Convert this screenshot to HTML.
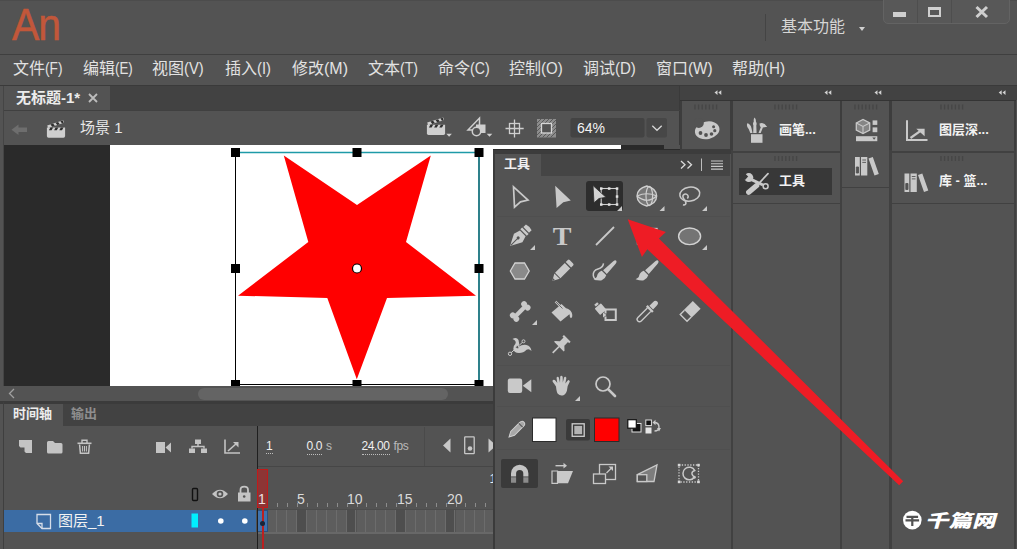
<!DOCTYPE html>
<html lang="zh-CN">
<head>
<meta charset="utf-8">
<title>Animate</title>
<style>
*{box-sizing:border-box;margin:0;padding:0}
html,body{width:1017px;height:549px;overflow:hidden;background:#535353}
body{position:relative;font-family:"Liberation Sans","Noto Sans CJK SC",sans-serif;color:#e6e6e6;font-size:15px}
.a{position:absolute}
.t{position:absolute;white-space:nowrap;line-height:1}
svg{position:absolute;overflow:visible}
.l{display:inline-block;transform:scaleX(.82);transform-origin:0 50%}
</style>
</head>
<body>
<!-- title bar -->
<div class="a" id="titlebar" style="left:0;top:0;width:1017px;height:54px;background:#535353"></div>
<div class="a" style="left:0;top:0;width:1017px;height:1px;background:#4c4c4c"></div>
<div class="t" id="logo" style="left:12px;top:3px;font-size:44px;color:#c2573a;-webkit-text-stroke:.5px #c2573a;transform:scaleX(.93);transform-origin:0 0;letter-spacing:-1px">An</div>
<div class="a" style="left:765px;top:14px;width:1px;height:27px;background:#444"></div>
<div class="t" style="left:781px;top:19px;font-size:16px;color:#d6d6d6">基本功能</div>
<div class="a" style="left:859px;top:27px;width:0;height:0;border-left:3px solid transparent;border-right:3px solid transparent;border-top:4px solid #d0d0d0"></div>
<!-- window controls -->
<div class="a" style="left:883px;top:-1px;width:127px;height:25px;background:#585858;border:1px solid #636363;border-radius:0 0 5px 5px"></div>
<div class="a" style="left:917px;top:0;width:1px;height:23px;background:#4e4e4e"></div>
<div class="a" style="left:951px;top:0;width:1px;height:23px;background:#4e4e4e"></div>
<div class="a" style="left:893px;top:12px;width:13px;height:5px;background:#cfcfcf"></div>
<div class="a" style="left:928px;top:7px;width:13px;height:10px;border:2.500px solid #cfcfcf;border-top-width:3px"></div>
<svg style="left:975px;top:7px" width="14" height="10"><path d="M1.500 0 L12 10 M12 0 L1.500 10" stroke="#cfcfcf" stroke-width="3" fill="none"/></svg>
<!-- menu bar -->
<div class="a" style="left:0;top:54px;width:1017px;height:1px;background:#3f3f3f"></div>
<div class="a" id="menubar" style="left:0;top:55px;width:1017px;height:30px;background:#535353"></div>
<div class="t m" style="left:13px">文件<span class="l" style="transform:scaleX(0.855)">(F)</span></div>
<div class="t m" style="left:83px">编辑<span class="l" style="transform:scaleX(0.833)">(E)</span></div>
<div class="t m" style="left:152px">视图<span class="l" style="transform:scaleX(0.919)">(V)</span></div>
<div class="t m" style="left:225px">插入<span class="l" style="transform:scaleX(0.92)">(I)</span></div>
<div class="t m" style="left:292px">修改<span class="l" style="transform:scaleX(1.0)">(M)</span></div>
<div class="t m" style="left:368px">文本<span class="l" style="transform:scaleX(0.883)">(T)</span></div>
<div class="t m" style="left:438px">命令<span class="l" style="transform:scaleX(0.882)">(C)</span></div>
<div class="t m" style="left:509px">控制<span class="l" style="transform:scaleX(0.94)">(O)</span></div>
<div class="t m" style="left:583px">调试<span class="l" style="transform:scaleX(0.94)">(D)</span></div>
<div class="t m" style="left:656px">窗口<span class="l" style="transform:scaleX(0.955)">(W)</span></div>
<div class="t m" style="left:732px">帮助<span class="l" style="transform:scaleX(0.947)">(H)</span></div>
<style>.m{top:61px;font-size:16px;color:#e2e2e2}</style>
<!-- doc tab bar -->
<div class="a" style="left:4px;top:85px;width:1013px;height:26px;background:#424242"></div>
<div class="a" style="left:0;top:85px;width:1017px;height:1px;background:#3a3a3a"></div>
<div class="a" style="left:4px;top:86px;width:106px;height:25px;background:#535353"></div>
<div class="t" style="left:16px;top:90px;font-size:15px;font-weight:700;color:#ececec">无标题-1*</div>
<svg style="left:88px;top:93px" width="10" height="10"><path d="M1 1 L9 9 M9 1 L1 9" stroke="#bdbdbd" stroke-width="1.8" fill="none"/></svg>
<div class="a" style="left:3px;top:86px;width:1px;height:316px;background:#454545"></div>
<!-- scene bar -->
<div class="a" style="left:4px;top:110px;width:676px;height:1px;background:#404040;z-index:2"></div>
<div class="a" style="left:4px;top:111px;width:676px;height:35px;background:#535353"></div>
<div class="t" style="left:80px;top:120px;font-size:15px;color:#e6e6e6">场景 1</div>
<svg id="sceneicons" style="left:0;top:0" width="690" height="150" viewBox="0 0 690 150" fill="#cfcfcf">
<path d="M11.500 129.800 L18.500 124.500 V127.500 H27 V132 H18.500 V135 Z" fill="#6e6e6e"/>
<!-- clapper left -->
<g transform="translate(46.9 120.2)"><path d="M0 7.400 H18.200 V15.900 Q18.200 17.500 16.600 17.500 H1.600 Q0 17.500 0 15.900 Z"/><path d="M.3 5.200 L16.300 0 L17.200 2.600 L1.200 7.800 Z"/><path d="M3.600 4.200 l2.600 -.85 l1.700 2.300 l-2.600 .85 Z M8.600 2.600 l2.600 -.85 l1.700 2.300 l-2.600 .85 Z M13.500 1 l2.300 -.75 l1 2.500 l-1.600 .5 Z M3.500 7.400 h2.700 l-1.500 2.600 h-2.700 Z M8.700 7.400 h2.700 l-1.500 2.600 h-2.700 Z M13.900 7.400 h2.700 l-1.500 2.600 h-2.700 Z" fill="#2e2e2e"/></g>
<!-- clapper right -->
<g transform="translate(426.9 117.4)"><path d="M0 7.400 H18.200 V15.900 Q18.200 17.500 16.600 17.500 H1.600 Q0 17.500 0 15.900 Z"/><path d="M.3 5.200 L16.300 0 L17.200 2.600 L1.200 7.800 Z"/><path d="M3.600 4.200 l2.600 -.85 l1.700 2.300 l-2.600 .85 Z M8.600 2.600 l2.600 -.85 l1.700 2.300 l-2.600 .85 Z M13.500 1 l2.300 -.75 l1 2.500 l-1.600 .5 Z M3.500 7.400 h2.700 l-1.500 2.600 h-2.700 Z M8.700 7.400 h2.700 l-1.500 2.600 h-2.700 Z M13.900 7.400 h2.700 l-1.500 2.600 h-2.700 Z" fill="#2e2e2e"/></g>
<path d="M446.300 133.700 h5.600 l-2.800 3 Z M486.700 133.700 h5.600 l-2.800 3 Z"/>
<!-- symbol icon -->
<path d="M468 130 L479.500 118 V130 Z" fill="none" stroke="#cfcfcf" stroke-width="1.500"/>
<rect x="476" y="124.500" width="9.500" height="8.500"/>
<circle cx="476.500" cy="131.500" r="4.200" fill="#535353" stroke="#cfcfcf" stroke-width="1.500"/>
<!-- crosshair -->
<path d="M514.500 119.500 V137.500 M505.500 128.500 H523.700" stroke="#cfcfcf" stroke-width="1.300" fill="none"/>
<rect x="509.500" y="123.500" width="10" height="10" fill="none" stroke="#cfcfcf" stroke-width="1.300"/>
<!-- clip icon -->
<rect x="537" y="119" width="19" height="18.500" fill="#8d8d8d"/>
<path d="M537 123 l4 -4 M537 127 l8 -8 M537 131 l12 -12 M537 135 l16 -16 M538.500 137.500 l17.500 -17.500 M542.500 137.500 l13.500 -13.500 M546.500 137.500 l9.500 -9.500 M550.500 137.500 l5.500 -5.500" stroke="#5a5a5a" stroke-width="1" fill="none"/>
<rect x="541.500" y="123.500" width="10" height="9.500" fill="#535353" stroke="#d6d6d6" stroke-width="1.300"/>
<!-- combo -->
<rect x="570.500" y="118" width="74" height="19.500" rx="2" fill="#434343"/>
<rect x="646.500" y="118" width="20.500" height="19.500" rx="2" fill="#474747"/>
<path d="M652.300 125.800 L657 130.300 L661.700 125.800" fill="none" stroke="#d6d6d6" stroke-width="1.300"/>
</svg>
<div class="t" style="left:577px;top:121px;font-size:14px;color:#f2f2f2">64%</div>
<div class="a" style="left:679px;top:86px;width:2px;height:315px;background:#3a3a3a"></div>
<!-- stage -->
<div class="a" style="left:4px;top:145px;width:676px;height:241px;background:#2a2a2a"></div>
<div class="a" style="left:110px;top:145px;width:511px;height:241px;background:#fff"></div>
<div class="a" style="left:664px;top:145px;width:16px;height:241px;background:#535353"></div>

<!-- selection box + star -->
<svg style="left:0;top:0" width="1017" height="549" viewBox="0 0 1017 549">
<polygon points="283.800,155.500 357,205 430.800,155.500 406,242 476,295.700 387,298 356.800,379.300 327.300,298 238,295.700 308.300,242" fill="#ff0000"/>
<path d="M235.500 152.500 V384.500 H479" stroke="#000" stroke-width="1" fill="none"/>
<path d="M235.500 152.500 H479" stroke="#1e9aa8" stroke-width="1.400" fill="none"/>
<path d="M479 152.500 V384.500" stroke="#0a6b77" stroke-width="1.700" fill="none"/>
<g fill="#000">
<rect x="231" y="148" width="9" height="9"/><rect x="352.500" y="148" width="9" height="9"/><rect x="474.500" y="148" width="9" height="9"/>
<rect x="231" y="264" width="9" height="9"/><rect x="474.500" y="264" width="9" height="9"/>
<rect x="231" y="380" width="9" height="6"/><rect x="352.500" y="380" width="9" height="6"/><rect x="474.500" y="380" width="9" height="6"/>
</g>
<circle cx="357" cy="268.5" r="4.5" fill="#fff" stroke="#000" stroke-width="1.2"/>
</svg>
<!-- h scrollbar -->
<div class="a" style="left:0;top:386px;width:495px;height:15px;background:#535353"></div>
<div class="a" style="left:198px;top:388px;width:250px;height:12px;background:#646464;border-radius:6px"></div>
<svg style="left:8px;top:388px" width="8" height="11"><path d="M6 1 L1.5 5.5 L6 10" stroke="#a0a0a0" stroke-width="1.3" fill="none"/></svg>


<!-- timeline -->
<div class="a" style="left:0;top:401px;width:495px;height:3px;background:#3b3b3b"></div>
<div class="a" style="left:4px;top:404px;width:490px;height:22px;background:#424242"></div>
<div class="a" style="left:4px;top:404px;width:59px;height:22px;background:#535353"></div>
<div class="t" style="left:13px;top:407px;font-size:13px;font-weight:700;color:#ececec">时间轴</div>
<div class="t" style="left:71px;top:407px;font-size:13px;font-weight:700;color:#8e8e8e">输出</div>
<div class="a" style="left:4px;top:426px;width:490px;height:123px;background:#535353"></div>
<div class="a" style="left:3px;top:402px;width:1px;height:147px;background:#3f3f3f"></div>
<div class="a" style="left:256.500px;top:426px;width:1.500px;height:123px;background:#1f1f1f"></div>
<div class="a" style="left:258px;top:466px;width:236px;height:1px;background:#464646"></div>
<div class="a" style="left:424px;top:427px;width:1px;height:39px;background:#4a4a4a"></div>
<!-- toolbar icons -->
<svg style="left:0;top:0" width="500" height="549" viewBox="0 0 500 549" fill="#c4c4c4">
<path d="M19 440 H32 V453 H26 L19 446 Z M20.5 447.5 H24.5 V451.5 Z" fill-rule="evenodd"/>
<path d="M47 442.5 Q47 441 48.5 441 H53 L55 443 H61 Q62.5 443 62.5 444.5 V452 Q62.5 453.5 61 453.5 H48.5 Q47 453.5 47 452 Z"/>
<g fill="none" stroke="#c4c4c4"><path d="M79.600 444.500 L80.400 453.200 H88.600 L89.400 444.500" stroke-width="1.500"/><path d="M77.500 443.300 H91.500" stroke-width="1.600"/><path d="M82 443 V440.300 H87 V443" stroke-width="1.400"/><path d="M82.600 446 V451.500 M84.500 446 V451.500 M86.400 446 V451.500" stroke-width="1"/></g>
<path d="M156 442 H165 V453 H156 Z M165.5 447.5 L171 442.5 V452.5 Z"/>
<path d="M195 439.500 H201 V444 H195 Z M189 448.500 H195 V453 H189 Z M201 448.500 H207 V453 H201 Z"/>
<path d="M198 444 V446.500 M192 448.500 V446.500 H204 V448.500" stroke="#c4c4c4" stroke-width="1.4" fill="none"/>
<path d="M225 439.500 V453 H240" stroke="#c4c4c4" stroke-width="1.6" fill="none"/>
<path d="M228 451 L237 443" stroke="#c4c4c4" stroke-width="1.6" fill="none"/>
<path d="M233 442 H238.500 V447.500 Z"/>
<!-- header icons -->
<rect x="192.500" y="488.500" width="5" height="12" rx="1" fill="none" stroke="#111" stroke-width="1.4"/>
<path d="M212 494 Q220 485.500 228 494 Q220 502.500 212 494 Z"/>
<circle cx="220" cy="494" r="3.300" fill="#535353"/><circle cx="220" cy="494" r="1.600"/>
<path d="M238 492.500 H250.500 V501.500 H238 Z"/>
<path d="M240.500 493 V490 Q240.500 486.700 244.200 486.700 Q248 486.700 248 490 V493" stroke="#c4c4c4" stroke-width="1.800" fill="none"/>
<circle cx="244.200" cy="496.500" r="1.300" fill="#535353"/>
</svg>
<!-- time readouts -->
<div class="t" style="left:266px;top:440px;font-size:12px;color:#f0f0f0;border-bottom:1px dotted #bdbdbd;padding-bottom:1px">1</div>
<div class="t" style="left:306.500px;top:440px;font-size:12px;letter-spacing:-.4px;color:#f0f0f0"><span style="border-bottom:1px dotted #bdbdbd;padding-bottom:1px">0.0</span><span style="color:#b9b9b9;margin-left:4px">s</span></div>
<div class="t" style="left:361.500px;top:440px;font-size:12px;letter-spacing:-.4px;color:#f0f0f0"><span style="border-bottom:1px dotted #bdbdbd;padding-bottom:1px">24.00</span><span style="color:#b9b9b9;margin-left:4px">fps</span></div>
<svg style="left:440px;top:434px" width="55" height="24" viewBox="440 434 55 24" fill="#c8c8c8">
<path d="M450.500 438.500 V452.500 L443 445.500 Z"/>
<rect x="464.700" y="436.800" width="9.500" height="16.800" rx=".6" fill="none" stroke="#c8c8c8" stroke-width="1.300"/>
<circle cx="470" cy="448.500" r="2.300"/>
<path d="M488.500 438.500 V452.500 L494 447.500 V443.500 Z"/>
</svg>
<div class="t" style="left:489.500px;top:472px;font-size:13px;color:#f0f0f0;width:4px;height:14px;overflow:hidden">1</div>
<!-- ruler -->
<div class="a" style="left:277.3px;top:503px;width:1px;height:4px;background:#8c8c8c"></div><div class="a" style="left:287.2px;top:503px;width:1px;height:4px;background:#8c8c8c"></div><div class="a" style="left:297.1px;top:503px;width:1px;height:4px;background:#8c8c8c"></div><div class="a" style="left:307.0px;top:503px;width:1px;height:4px;background:#8c8c8c"></div><div class="a" style="left:316.9px;top:503px;width:1px;height:4px;background:#8c8c8c"></div><div class="a" style="left:326.8px;top:503px;width:1px;height:4px;background:#8c8c8c"></div><div class="a" style="left:336.7px;top:503px;width:1px;height:4px;background:#8c8c8c"></div><div class="a" style="left:346.6px;top:503px;width:1px;height:4px;background:#8c8c8c"></div><div class="a" style="left:356.5px;top:503px;width:1px;height:4px;background:#8c8c8c"></div><div class="a" style="left:366.4px;top:503px;width:1px;height:4px;background:#8c8c8c"></div><div class="a" style="left:376.3px;top:503px;width:1px;height:4px;background:#8c8c8c"></div><div class="a" style="left:386.2px;top:503px;width:1px;height:4px;background:#8c8c8c"></div><div class="a" style="left:396.1px;top:503px;width:1px;height:4px;background:#8c8c8c"></div><div class="a" style="left:406.0px;top:503px;width:1px;height:4px;background:#8c8c8c"></div><div class="a" style="left:415.9px;top:503px;width:1px;height:4px;background:#8c8c8c"></div><div class="a" style="left:425.8px;top:503px;width:1px;height:4px;background:#8c8c8c"></div><div class="a" style="left:435.7px;top:503px;width:1px;height:4px;background:#8c8c8c"></div><div class="a" style="left:445.6px;top:503px;width:1px;height:4px;background:#8c8c8c"></div><div class="a" style="left:455.5px;top:503px;width:1px;height:4px;background:#8c8c8c"></div><div class="a" style="left:465.4px;top:503px;width:1px;height:4px;background:#8c8c8c"></div><div class="a" style="left:475.3px;top:503px;width:1px;height:4px;background:#8c8c8c"></div><div class="a" style="left:485.2px;top:503px;width:1px;height:4px;background:#8c8c8c"></div>

<div class="t r" style="left:258px;z-index:3;color:#f0e0e0">1</div>
<div class="t r" style="left:297px">5</div>
<div class="t r" style="left:347px">10</div>
<div class="t r" style="left:397px">15</div>
<div class="t r" style="left:447px">20</div>
<style>.r{top:492px;font-size:14px;color:#dadada}</style>
<!-- layer row -->
<div class="a" style="left:4px;top:510px;width:252px;height:22px;background:#3b6ca4"></div>
<svg style="left:0;top:0" width="260" height="549" viewBox="0 0 260 549">
<path d="M37 514.500 H50.500 V528.500 H42 L37 523.500 Z" fill="none" stroke="#d6dde8" stroke-width="1.300"/>
<path d="M37 523.500 H42 V528.500" fill="none" stroke="#d6dde8" stroke-width="1.300"/>
<rect x="191.500" y="513.500" width="6.500" height="14" fill="#00f0ff"/>
<circle cx="220.800" cy="521" r="2.800" fill="#fff"/><circle cx="244.800" cy="521" r="2.800" fill="#fff"/>
</svg>
<div class="t" style="left:58px;top:513px;font-size:15px;color:#f2f2f2">图层_1</div>
<!-- frames -->
<div class="a" style="left:257.5px;top:510px;width:9.9px;height:22px;background:#5d5d5d;border-right:1.500px solid #6c6c6c"></div>
<div class="a" style="left:267.4px;top:510px;width:9.9px;height:22px;background:#5d5d5d;border-right:1.500px solid #6c6c6c"></div>
<div class="a" style="left:277.3px;top:510px;width:9.9px;height:22px;background:#5d5d5d;border-right:1.500px solid #6c6c6c"></div>
<div class="a" style="left:287.2px;top:510px;width:9.9px;height:22px;background:#5d5d5d;border-right:1.500px solid #6c6c6c"></div>
<div class="a" style="left:297.1px;top:510px;width:9.9px;height:22px;background:#4e4e4e;border-right:1.500px solid #6c6c6c"></div>
<div class="a" style="left:307.0px;top:510px;width:9.9px;height:22px;background:#5d5d5d;border-right:1.500px solid #6c6c6c"></div>
<div class="a" style="left:316.9px;top:510px;width:9.9px;height:22px;background:#5d5d5d;border-right:1.500px solid #6c6c6c"></div>
<div class="a" style="left:326.8px;top:510px;width:9.9px;height:22px;background:#5d5d5d;border-right:1.500px solid #6c6c6c"></div>
<div class="a" style="left:336.7px;top:510px;width:9.9px;height:22px;background:#5d5d5d;border-right:1.500px solid #6c6c6c"></div>
<div class="a" style="left:346.6px;top:510px;width:9.9px;height:22px;background:#4e4e4e;border-right:1.500px solid #6c6c6c"></div>
<div class="a" style="left:356.5px;top:510px;width:9.9px;height:22px;background:#5d5d5d;border-right:1.500px solid #6c6c6c"></div>
<div class="a" style="left:366.4px;top:510px;width:9.9px;height:22px;background:#5d5d5d;border-right:1.500px solid #6c6c6c"></div>
<div class="a" style="left:376.3px;top:510px;width:9.9px;height:22px;background:#5d5d5d;border-right:1.500px solid #6c6c6c"></div>
<div class="a" style="left:386.2px;top:510px;width:9.9px;height:22px;background:#5d5d5d;border-right:1.500px solid #6c6c6c"></div>
<div class="a" style="left:396.1px;top:510px;width:9.9px;height:22px;background:#4e4e4e;border-right:1.500px solid #6c6c6c"></div>
<div class="a" style="left:406.0px;top:510px;width:9.9px;height:22px;background:#5d5d5d;border-right:1.500px solid #6c6c6c"></div>
<div class="a" style="left:415.9px;top:510px;width:9.9px;height:22px;background:#5d5d5d;border-right:1.500px solid #6c6c6c"></div>
<div class="a" style="left:425.8px;top:510px;width:9.9px;height:22px;background:#5d5d5d;border-right:1.500px solid #6c6c6c"></div>
<div class="a" style="left:435.7px;top:510px;width:9.9px;height:22px;background:#5d5d5d;border-right:1.500px solid #6c6c6c"></div>
<div class="a" style="left:445.6px;top:510px;width:9.9px;height:22px;background:#4e4e4e;border-right:1.500px solid #6c6c6c"></div>
<div class="a" style="left:455.5px;top:510px;width:9.9px;height:22px;background:#5d5d5d;border-right:1.500px solid #6c6c6c"></div>
<div class="a" style="left:465.4px;top:510px;width:9.9px;height:22px;background:#5d5d5d;border-right:1.500px solid #6c6c6c"></div>
<div class="a" style="left:475.3px;top:510px;width:9.9px;height:22px;background:#5d5d5d;border-right:1.500px solid #6c6c6c"></div>
<div class="a" style="left:485.2px;top:510px;width:8.8px;height:22px;background:#5d5d5d;border-right:1.500px solid #6c6c6c"></div>


<div class="a" style="left:257.500px;top:510px;width:10px;height:22px;background:#3f72ae;border:1px solid #2b4f7d;border-left:none"></div>
<div class="a" style="left:258px;top:509px;width:236px;height:1px;background:#4c4c4c"></div>
<div class="a" style="left:258px;top:532px;width:236px;height:1.500px;background:#686868"></div>
<!-- playhead -->
<div class="a" style="left:256.500px;top:469px;width:11.500px;height:38.500px;background:rgba(190,30,30,.55);border:1.500px solid #c01a1a"></div>
<div class="a" style="left:262px;top:507px;width:1.500px;height:42px;background:#bb2020"></div>
<div class="a" style="left:260px;top:521px;width:5px;height:5px;background:#16243a;border-radius:50%"></div>

<!-- tools panel -->
<div class="a" style="left:493px;top:150px;width:239px;height:399px;background:#535353"></div>
<div class="a" style="left:493px;top:149px;width:239px;height:5px;background:#3c3c3c;border-top:1.500px solid #2b2b2b"></div>
<div class="a" style="left:493px;top:150px;width:2px;height:399px;background:#3b3b3b"></div>
<div class="a" style="left:730.500px;top:150px;width:1.500px;height:399px;background:#404040"></div>
<div class="a" style="left:495px;top:154px;width:235px;height:22px;background:#454545"></div>
<div class="a" style="left:495px;top:154px;width:46px;height:22px;background:#535353"></div>
<div class="t" style="left:504px;top:157px;font-size:13px;font-weight:700;color:#f0f0f0">工具</div>
<svg style="left:676px;top:156px" width="52" height="18" viewBox="676 156 52 18" fill="none" stroke="#dcdcdc">
<path d="M681 161 L685 164.700 L681 168.400 M687.500 161 L691.500 164.700 L687.500 168.400" stroke-width="1.300"/>
<path d="M701.500 158.500 V171" stroke="#bdbdbd" stroke-width="1"/>
<path d="M711 161 H723 M711 163.700 H723 M711 166.400 H723 M711 169.100 H723" stroke="#c8c8c8" stroke-width="1.100"/>
</svg>
<div class="a" style="left:497px;top:216px;width:233px;height:1px;background:#4f4f4f"></div>
<div class="a" style="left:497px;top:365px;width:233px;height:1px;background:#4f4f4f"></div>
<div class="a" style="left:497px;top:406px;width:233px;height:1px;background:#4f4f4f"></div>
<div class="a" style="left:497px;top:449px;width:233px;height:1px;background:#4f4f4f"></div>
<div class="a" style="left:586px;top:181px;width:37px;height:30px;background:#2d2d2d;border-radius:3px"></div>
<div class="a" style="left:501px;top:459px;width:37px;height:29px;background:#3a3a3a;border-radius:2px"></div>
<svg id="toolicons" style="left:0;top:0" width="1017" height="549" viewBox="0 0 1017 549" fill="#c9c9c9" stroke="none">
<!-- row1 -->
<path d="M513.500 186.800 L528 200 L520.500 201.800 L514.500 207.200 Z" fill="none" stroke="#c9c9c9" stroke-width="1.700" stroke-linejoin="miter"/>
<path d="M555.200 185.800 L570.800 200.600 L563.300 202.200 L556.600 208 Z"/>
<g stroke="#d0d0d0" stroke-width="1.100" fill="none"><rect x="601.200" y="188.500" width="15.800" height="16"/></g>
<g fill="#e2e2e2"><rect x="600" y="187.300" width="2.500" height="2.500"/><rect x="607.900" y="187.300" width="2.500" height="2.500"/><rect x="615.800" y="187.300" width="2.500" height="2.500"/><rect x="615.800" y="195.300" width="2.500" height="2.500"/><rect x="600" y="203.300" width="2.500" height="2.500"/><rect x="607.900" y="203.300" width="2.500" height="2.500"/><rect x="615.800" y="203.300" width="2.500" height="2.500"/></g>
<path d="M593 185.500 L606 197.300 L599 198.500 L594 202.800 Z" fill="#d4d4d4" stroke="#2d2d2d" stroke-width=".8"/>
<path d="M646.800 186 Q656.500 188.500 656.700 196 Q656.500 203.500 646.800 206 Q637.200 203.500 637 196 Q637.200 188.500 646.800 186 Z" fill="#777" stroke="#cfcfcf" stroke-width="1.300"/>
<g fill="none" stroke="#cfcfcf" stroke-width="1.200"><ellipse cx="649.300" cy="196" rx="3.300" ry="9.600"/><path d="M637 196 Q647 204.500 656.700 196 M637 196 Q647 191.500 656.700 196"/></g>
<g fill="none" stroke="#c9c9c9" stroke-width="1.500"><ellipse cx="689.800" cy="194.100" rx="10" ry="7" transform="rotate(-8 689.800 194.100)"/><path d="M687.300 198.500 a2.600 2.600 0 1 0 -4.300 -1.200 c.7 2.500 4.500 4.500 2.500 7 q-1 1 -2.500 .5"/></g>
<path d="M622 206 v5 h-5 Z M664.500 206 v5 h-5 Z M707 206 v5 h-5 Z"/>
<!-- row2 -->
<g transform="translate(520.300 235.800) rotate(45)"><path d="M0 14.500 L-6 3 L-4 -3.500 H4 L6 3 Z M-4.600 -4.600 H4.600 V-7.200 H-4.600 Z M-4 -8.300 H4 V-12 Q0 -13.300 -4 -12 Z"/><circle cx="0" cy="3" r="1.500" fill="#535353"/><path d="M0 4 V13.500" stroke="#535353" stroke-width="1"/></g>
<text x="562" y="244.600" text-anchor="middle" font-family="'Liberation Serif',serif" font-weight="700" font-size="25.500" transform="translate(562 0) scale(1.1 1) translate(-562 0)">T</text>
<path d="M596 245 L614 227" stroke="#c9c9c9" stroke-width="1.800" fill="none"/>
<rect x="637.500" y="228.500" width="19.500" height="15.500" fill="#868686" stroke="#d2d2d2" stroke-width="1.300"/>
<ellipse cx="689.600" cy="236.300" rx="11" ry="8.300" fill="#747474" stroke="#d2d2d2" stroke-width="1.400"/>
<path d="M535 245 v5 h-5 Z M707 245 v5 h-5 Z"/>
<!-- row3 -->
<path d="M510.300 271 L515 263 H524.500 L529.200 271 L524.500 279 H515 Z" fill="#8a8a8a" stroke="#d2d2d2" stroke-width="1.300"/>
<g transform="translate(562.200 271) rotate(45)"><path d="M0 14 L-3.800 7.300 H3.800 Z M-3.800 6.300 H3.800 V-7.500 H-3.800 Z M-3.800 -8.800 H3.800 V-11.700 Q3.800 -13 2.400 -13 H-2.400 Q-3.800 -13 -3.800 -11.700 Z"/><path d="M0 14 L-1.300 11.600 H1.300 Z" fill="#535353"/></g>
<g transform="translate(606 271) rotate(45)"><path d="M0 -14.500 Q1.400 -14.500 1.700 -12 L2.600 1.500 H-2.600 L-1.700 -12 Q-1.400 -14.500 0 -14.500 Z M-3.200 2.800 H3.200 Q5 6 3.500 9.500 Q2 12 -3 14.500 Q-1.500 11 -3 9.500 Q-5 6.500 -3.200 2.800 Z"/></g>
<path d="M603.500 263.300 Q603 267.500 598 269 Q592.800 270.500 593.300 275.500 Q593.800 278.800 596.500 279.800" fill="none" stroke="#c9c9c9" stroke-width="1.500"/>
<g transform="translate(648 271) rotate(45)"><path d="M0 -14.500 Q1.400 -14.500 1.700 -12 L2.600 1.500 H-2.600 L-1.700 -12 Q-1.400 -14.500 0 -14.500 Z M-3.200 2.800 H3.200 Q5 6 3.500 9.500 Q2 12 -3 14.500 Q-1.500 11 -3 9.500 Q-5 6.500 -3.200 2.800 Z"/></g>
<!-- row4 -->
<g transform="translate(520.200 311.500) rotate(45)"><rect x="-2.100" y="-7" width="4.200" height="14"/><circle cx="-2.500" cy="-8" r="2.900"/><circle cx="2.500" cy="-8" r="2.900"/><circle cx="-2.500" cy="8" r="2.900"/><circle cx="2.500" cy="8" r="2.900"/></g>
<path d="M537 320 v5 h-5 Z"/>
<path d="M561.500 304 L571 313 L560.500 321.500 L551.500 312.500 Z"/>
<path d="M555.500 301.500 L562.500 308.500" stroke="#c9c9c9" stroke-width="2.200" fill="none"/>
<path d="M555.500 301.500 L562.500 308.500" stroke="#535353" stroke-width=".8" fill="none"/>
<path d="M566 308 Q572 310 572.300 315 Q572.500 318 571 318.300 Q569.500 318 569.700 315 Z"/>
<g transform="translate(599.800 308.300) rotate(-40) scale(.88)"><rect x="-4.700" y="-3.500" width="9.400" height="9.500" rx="1"/><rect x="-2.200" y="-7.200" width="4.400" height="2.800"/></g>
<path d="M605.500 313.500 V309.500 H615.800 V320 H605.500 V316.500" fill="none" stroke="#c9c9c9" stroke-width="2"/>
<path d="M603 312.500 l3.500 2.500 l-3.500 2.500 Z"/>
<g transform="translate(647 311.800) rotate(45)"><path d="M-2.400 -3 V10.500 Q-2.400 13 0 13 Q2.400 13 2.400 10.500 V-3" fill="none" stroke="#c9c9c9" stroke-width="1.400"/><rect x="-4.300" y="-5.200" width="8.600" height="2.400"/><path d="M-2.600 -6 H2.600 V-11 Q2.600 -14.500 0 -14.500 Q-2.600 -14.500 -2.600 -11 Z"/></g>
<g transform="translate(690 311.500) rotate(45)"><path d="M-5.500 -9.500 H5.500 V3 H-5.500 Z"/><path d="M-4.800 3 V9 H4.800 V3" fill="none" stroke="#c9c9c9" stroke-width="1.400"/></g>
<!-- row5 -->
<path d="M512.500 339 Q516.500 336.500 518.500 340 Q520 343.500 518 347 Q522.500 344.300 526.500 345 Q530.800 346 531.500 351 Q529 348.300 526.500 349.800 Q523.500 353 519 353 Q514 352.800 513.300 349 Q513 346 515.300 344 Q517 341 512.500 339 Z"/>
<path d="M510 353.800 L523.500 341.300" stroke="#c9c9c9" stroke-width="1" fill="none"/>
<circle cx="510" cy="353.800" r="1.700" fill="#535353" stroke="#c9c9c9" stroke-width="1"/><circle cx="517.300" cy="347.200" r="1.600" fill="#535353" stroke="#c9c9c9" stroke-width="1"/><circle cx="523.500" cy="341.300" r="1.500" fill="#535353" stroke="#c9c9c9" stroke-width="1"/>
<g transform="translate(560.300 345.300) rotate(45) scale(1.050 .86)"><path d="M-4.500 -11.500 H4.500 V-9 H3 V-3 L6.500 1 V2.300 H-6.500 V1 L-3 -3 V-9 H-4.500 Z"/><path d="M0 2 V12.500" stroke="#c9c9c9" stroke-width="1.600" fill="none"/></g>
<!-- row6 -->
<rect x="507.800" y="378.500" width="14.400" height="14.500" rx="2.200"/>
<path d="M522.800 385.700 L531.300 379.300 V392.200 Z"/>
<path d="M556 386.500 Q554.500 384 553 382.300 Q551.800 380.800 553 380 Q554.300 379.300 555.800 381 L557.300 383 L556.600 378.500 Q556.400 377 557.500 376.800 Q558.700 376.700 559 378.200 L560 382.700 L560.200 377 Q560.300 375.600 561.500 375.700 Q562.700 375.800 562.700 377.200 L562.800 382.500 L564 377.800 Q564.400 376.500 565.500 376.800 Q566.600 377.200 566.300 378.600 L565.300 383.500 L567.500 380.700 Q568.400 379.700 569.300 380.400 Q570.200 381.200 569.500 382.300 Q567.500 385.500 567.200 389 Q566.800 393.500 563.500 395.300 Q560 396.300 557.800 393.800 Q556.500 392 556 386.500 Z"/>
<path d="M580 396 v5 h-5 Z"/>
<circle cx="603" cy="384" r="7" fill="none" stroke="#c9c9c9" stroke-width="1.700"/>
<path d="M608.300 389.300 L615 396" stroke="#c9c9c9" stroke-width="2.600" fill="none" stroke-linecap="round"/>
<!-- row7 -->
<g transform="translate(516.500 429.500) rotate(45)"><path d="M0 10.500 L-2.700 5.500 V-7 Q-2.700 -10.500 0 -10.500 Q2.700 -10.500 2.700 -7 V5.500 Z" fill="#a8a8a8" stroke="#d0d0d0" stroke-width="1"/><path d="M-2.700 -6 H2.700" stroke="#535353" stroke-width="1"/></g>
<rect x="532.500" y="418" width="23.500" height="23.500" fill="#fff" stroke="#2b2b2b" stroke-width="1"/>
<rect x="566" y="419" width="24" height="21.500" rx="2" fill="#3a3a3a"/>
<rect x="572.200" y="423.800" width="12" height="12.500" fill="#3a3a3a" stroke="#d0d0d0" stroke-width="1.300"/><rect x="574.300" y="425.900" width="7.800" height="8.300" fill="#b4b4b4"/>
<rect x="594.500" y="418" width="24.500" height="23.500" fill="#ff0000" stroke="#2b2b2b" stroke-width="1"/>
<rect x="632" y="423.500" width="9" height="8.500" fill="#111" stroke="#e0e0e0" stroke-width="1"/>
<rect x="627.800" y="419.700" width="8.500" height="8.500" fill="#fff" stroke="#111" stroke-width="1.200"/>
<rect x="645.800" y="420" width="5.600" height="5.600" fill="#111" stroke="#e0e0e0" stroke-width="1"/>
<rect x="645.500" y="427.500" width="6" height="6" fill="#e6e6e6"/>
<path d="M654 422.500 Q659 422.500 659 427 Q659 431 654.500 431" fill="none" stroke="#c9c9c9" stroke-width="1.400"/>
<path d="M655.500 419.800 L652.500 422.500 L655.500 425.200 Z M657 428 L661 428 L659 431.500 Z"/>
<!-- row8 -->
<path d="M511 476.500 V473.500 A8.700 8.700 0 0 1 528.400 473.500 V476.500 H523.300 V473.500 A3.600 3.600 0 0 0 516.100 473.500 V476.500 Z" fill="#c4c4c4"/>
<path d="M511 477.300 H516.100 V482.700 H511 Z M523.300 477.300 H528.400 V482.700 H523.300 Z" fill="#8c8c8c"/>
<path d="M557.500 471 H573 L568 483.300 H552.500 Z" fill="#c9c9c9"/>
<path d="M552 471 H557.500 V483.300 H552 Z" fill="#535353" stroke="#c9c9c9" stroke-width="1.200"/>
<path d="M555.500 465.700 H565" stroke="#c9c9c9" stroke-width="1.400" fill="none"/><path d="M563.500 462.800 L567 465.700 L563.500 468.600 Z"/>
<g fill="none" stroke="#c9c9c9" stroke-width="1.300"><rect x="599.500" y="464.500" width="16" height="15"/><rect x="593.500" y="474" width="12" height="9.500" fill="#535353"/><path d="M606.500 473 L612 467.500"/></g>
<path d="M608.500 466.500 H613 V471 Z"/>
<path d="M637.300 474.700 L657 464.800 L654 481.500 H637.300 Z" fill="#7d7d7d" stroke="#c9c9c9" stroke-width="1.300"/>
<rect x="637.300" y="474.700" width="9.500" height="6.800" fill="#535353" stroke="#c9c9c9" stroke-width="1.300"/>
<rect x="679" y="465" width="19.500" height="17" fill="none" stroke="#c9c9c9" stroke-width="1.300" stroke-dasharray="1.300 1.500"/>
<g fill="#d8d8d8"><rect x="677.800" y="463.800" width="2.600" height="2.600"/><rect x="697.200" y="463.800" width="2.600" height="2.600"/><rect x="677.800" y="480.600" width="2.600" height="2.600"/><rect x="697.200" y="480.600" width="2.600" height="2.600"/></g>
<path d="M694.500 477 A6.300 6.300 0 1 1 694.800 470.500 Q691.500 471.500 692 474 Q692.500 476 694.500 477 Z" fill="none" stroke="#c9c9c9" stroke-width="1.500"/>
<circle cx="694.300" cy="477.300" r="1.500"/>
</svg>

<!-- right dock -->
<div class="a" style="left:680px;top:86px;width:337px;height:64px;background:#3d3d3d"></div>
<div class="a" style="left:731px;top:150px;width:286px;height:399px;background:#414141"></div>
<div class="a" style="left:680px;top:86px;width:337px;height:14px;background:#424242"></div>
<div class="a" style="left:680px;top:100px;width:337px;height:1px;background:#343434"></div>
<!-- col1 -->
<div class="a" style="left:682px;top:101px;width:48px;height:48px;background:#535353"></div>
<!-- col2 -->
<div class="a" style="left:732.500px;top:101px;width:107px;height:50px;background:#535353"></div>
<div class="a" style="left:732.500px;top:152.500px;width:107px;height:50px;background:#535353"></div>
<div class="a" style="left:732.500px;top:204px;width:107px;height:345px;background:#535353"></div>
<div class="a" style="left:739px;top:168px;width:93px;height:27px;background:#383838"></div>
<!-- col3 -->
<div class="a" style="left:841.500px;top:101px;width:47.500px;height:85.500px;background:#535353"></div>
<div class="a" style="left:841.500px;top:188px;width:47.500px;height:361px;background:#535353"></div>
<div class="a" style="left:1015.500px;top:100px;width:2px;height:449px;background:#505050"></div>
<!-- col4 -->
<div class="a" style="left:891.500px;top:101px;width:122px;height:50px;background:#535353"></div>
<div class="a" style="left:891.500px;top:152.500px;width:122px;height:50px;background:#535353"></div>
<div class="a" style="left:891.500px;top:204px;width:122px;height:345px;background:#535353"></div>
<div class="t p" style="left:779px;top:122.500px">画笔...</div>
<div class="t p" style="left:779px;top:174px">工具</div>
<div class="t p" style="left:939px;top:122.500px">图层深...</div>
<div class="t p" style="left:939px;top:174px">库 - 篮...</div>
<style>.p{font-size:13px;font-weight:700;color:#f2f2f2}</style>
<svg id="dockicons" style="left:0;top:0" width="1017" height="549" viewBox="0 0 1017 549" fill="#c9c9c9">
<!-- collapse arrows -->
<g fill="#d2d2d2"><path d="M717.500 90.300 v4.600 l-3 -2.300 Z M721.300 90.300 v4.600 l-3 -2.300 Z M827.500 90.300 v4.600 l-3 -2.300 Z M831.300 90.300 v4.600 l-3 -2.300 Z M877.500 90.300 v4.600 l-3 -2.300 Z M881.300 90.300 v4.600 l-3 -2.300 Z M1001.700 90.300 v4.600 l-3 -2.300 Z M1005.500 90.300 v4.600 l-3 -2.300 Z"/></g>
<!-- grippers -->
<g stroke="#464646" stroke-width="1.300" fill="none">
<path d="M695 104.500 v5 m3.600 -5 v5 m3.600 -5 v5 m3.600 -5 v5 m3.600 -5 v5 m3.600 -5 v5 m3.600 -5 v5"/>
<path d="M775 104.500 v5 m3.600 -5 v5 m3.600 -5 v5 m3.600 -5 v5 m3.600 -5 v5 m3.600 -5 v5 m3.600 -5 v5"/>
<path d="M775 156 v5 m3.600 -5 v5 m3.600 -5 v5 m3.600 -5 v5 m3.600 -5 v5 m3.600 -5 v5 m3.600 -5 v5"/>
<path d="M855 104.500 v5 m3.600 -5 v5 m3.600 -5 v5 m3.600 -5 v5 m3.600 -5 v5 m3.600 -5 v5 m3.600 -5 v5"/>
<path d="M941 104.500 v5 m3.600 -5 v5 m3.600 -5 v5 m3.600 -5 v5 m3.600 -5 v5 m3.600 -5 v5 m3.600 -5 v5"/>
<path d="M941 156 v5 m3.600 -5 v5 m3.600 -5 v5 m3.600 -5 v5 m3.600 -5 v5 m3.600 -5 v5 m3.600 -5 v5"/>
</g>
<!-- palette -->
<ellipse cx="707.200" cy="130.300" rx="12.400" ry="8.800" transform="rotate(-12 707.200 130.300)"/>
<circle cx="698.800" cy="123" r="5" fill="#535353"/>
<g fill="#535353"><circle cx="700.500" cy="133" r="1.900"/><circle cx="706" cy="135" r="1.900"/><circle cx="711.500" cy="134" r="1.800"/><circle cx="714.800" cy="130.700" r="1.600"/><circle cx="713.600" cy="126.800" r="1.500"/></g>
<!-- brush pot -->
<path d="M751 134.200 H762.500 V142.800 H751 Z"/>
<path d="M754.500 117.400 q1.600 1.500 1.400 4 q1.300 2 .4 4 l.3 7.600 h-3.400 l.2 -7.600 q-1 -2 .4 -4 q-.4 -2.500 .7 -4 Z M747.200 123.300 q3.500 .8 4.300 5 l1 4.700 h-2.200 l-1.500 -3.800 q-2.600 -2.200 -1.600 -5.900 Z M759.500 123.500 q4.300 -1.800 7.700 3.500 q-2.500 -.3 -4.300 .6 l-2.200 5.400 h-2.200 l2.300 -5.800 q-1.300 -1.500 -1.300 -3.700 Z"/>
<!-- tools icon (wrench + screwdriver) -->
<circle cx="748.800" cy="177.600" r="4.500"/>
<path d="M741 172 L748.300 175.200 L746.500 179.600 L739.500 176.500 Z" fill="#383838" transform="rotate(20 744.500 175.500)"/>
<path d="M751 179.300 L763 185" stroke="#c9c9c9" stroke-width="3" fill="none"/>
<circle cx="765.600" cy="186.200" r="2.500" fill="#383838" stroke="#c9c9c9" stroke-width="1.500"/>
<path d="M768 173.700 L757.500 184.800" stroke="#c9c9c9" stroke-width="1.700" fill="none" stroke-linecap="round"/>
<path d="M756.700 185.600 L748.700 192.300" stroke="#c9c9c9" stroke-width="5.200" fill="none" stroke-linecap="round"/>
<!-- col3 icons -->
<path d="M856.300 123 L863 119.500 L869.700 123 V130 L863 133.500 L856.300 130 Z" fill="#858585" stroke="#c9c9c9" stroke-width="1.300"/>
<path d="M856.300 123 L863 126.500 L869.700 123 M863 126.500 V133.500" fill="none" stroke="#c9c9c9" stroke-width="1.100"/>
<rect x="872.600" y="120.400" width="4.700" height="4.500"/><rect x="872.600" y="127.400" width="4.700" height="4.800"/>
<rect x="856" y="136.200" width="21.300" height="5"/><path d="M872.300 137.500 h3.600 l-1.800 2.300 Z" fill="#535353"/>
<g id="lib1"><path d="M855 157 H859.800 V175.500 H855 Z M861 157 H867.300 V175.500 H861 Z M868.500 158.500 L872.800 157 L878.800 174 L874.500 175.500 Z"/><path d="M856.300 167 h2.200 v6 h-2.200 Z M862.300 160 h3.700 m-3.700 2.400 h3.700" fill="#535353" stroke="#535353" stroke-width=".9"/></g>
<!-- graph icon -->
<path d="M907 120.200 V140 H927.500" fill="none" stroke="#c9c9c9" stroke-width="2"/>
<path d="M910.500 138 L920.500 130.800" fill="none" stroke="#c9c9c9" stroke-width="2.200"/>
<path d="M916.300 128.800 H924.600 V136.300 Z"/>
<!-- library icon col4 -->
<g transform="translate(49.500 16.500)"><path d="M855 157 H859.800 V175.500 H855 Z M861 157 H867.300 V175.500 H861 Z M868.500 158.500 L872.800 157 L878.800 174 L874.500 175.500 Z"/><path d="M856.300 167 h2.200 v6 h-2.200 Z M862.300 160 h3.700 m-3.700 2.400 h3.700" fill="#535353" stroke="#535353" stroke-width=".9"/></g>
</svg>


<!-- red annotation arrow -->
<svg style="left:0;top:0" width="1017" height="549" viewBox="0 0 1017 549">
<path d="M627.700 219.200 L665.900 231.900 L658.900 238.400 L903.200 481.200 L899.200 485.200 L647.300 249.300 L641.900 257 Z" fill="#ee1c25"/>
</svg>
<!-- watermark -->
<svg style="left:900px;top:508px" width="110" height="26" viewBox="900 508 110 26">
<circle cx="912.300" cy="520.100" r="9.300" fill="#fff"/>
<path d="M906.500 516.800 H918.100 M905.500 520.400 H919.100 M912.300 517.500 V526" stroke="#535353" stroke-width="2.200" fill="none"/>
</svg>
<div class="t" id="wm" style="left:924px;top:513px;font-size:17.500px;font-weight:900;color:#fff;transform-origin:0 100%;transform:scaleX(1.34) skewX(-12deg);letter-spacing:0">千篇网</div>
</body>
</html>
